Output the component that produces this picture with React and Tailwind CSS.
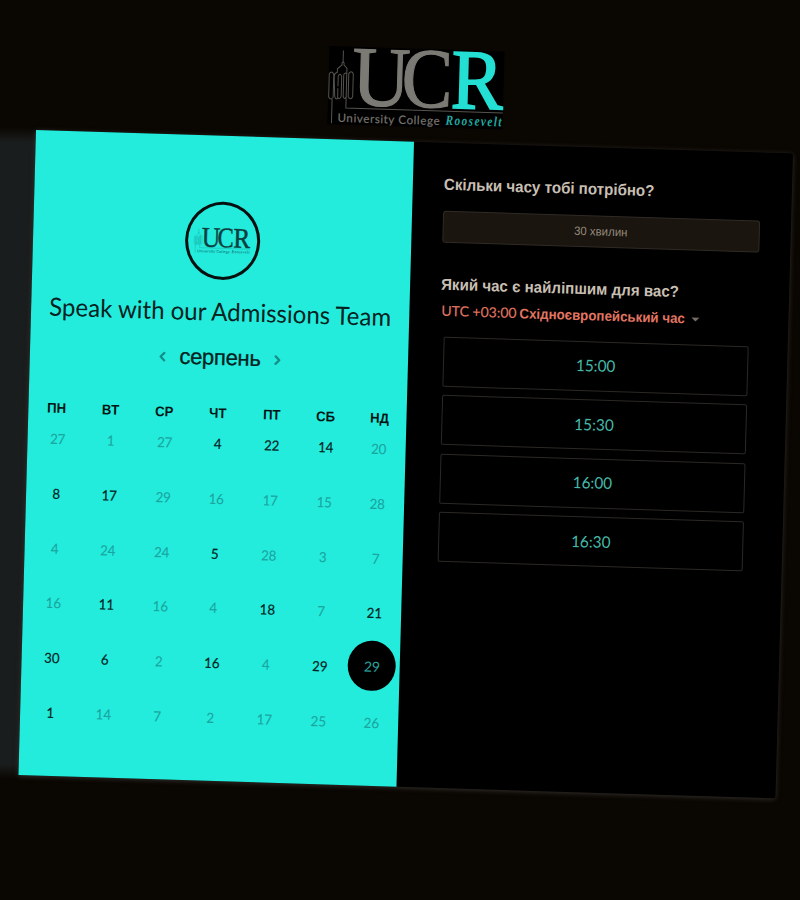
import { ChevronLeft, ChevronRight } from "lucide-react";

const WEEKDAYS = ["ПН", "ВТ", "СР", "ЧТ", "ПТ", "СБ", "НД"];

// Days marked true can be booked.
const DAYS = [
  [27], [1], [27], [4, true], [22, true], [14, true], [20],
  [8, true], [17, true], [29], [16], [17], [15], [28],
  [4], [24], [24], [5, true], [28], [3], [7],
  [16], [11, true], [16], [4], [18, true], [7], [21, true],
  [30, true], [6, true], [2], [16, true], [4], [29, true], [29, true],
  [1, true], [14], [7], [2], [17], [25], [26],
];
const SELECTED = 34;
const SLOTS = ["15:00", "15:30", "16:00", "16:30"];

const SANS = "font-['Lato','Liberation_Sans',sans-serif]";
const ARIAL = "font-['Liberation_Sans',sans-serif]";
const SERIF = "font-['Liberation_Serif',serif]";

function Logo({ className, main, accent, line, caption, script }) {
  return (
    <svg viewBox="0 0 175 78" preserveAspectRatio="none" className={`overflow-visible ${className}`}>
      <g fill="none" stroke={line} strokeWidth="1">
        <path d="M14 4v11M14 15l-1 1.5v2l-4.5 4v4M14 15l1 1.5v2l3 3v6M0.5 28q2-4 4.5 0v23q-2.500 4-4.500 0zM8.500 26q-3 1-3 4l1 20q1 4 3 2v-10M9.500 40v-10q1.500-4 3.500 0v20q-2 4-3.500 1M15 28q1.500-3 3 0M15 28v22q1.500 4 3 0M20 27q2.500-4 4.500 0v23q-2 4-4.500 0zM4 53v24M18 28v33.500h157" />
      </g>
      <g className={SERIF} fontSize="85">
        <text x="23.500" y="58" fill={main} stroke={main} strokeWidth="1.2" textLength="58" lengthAdjust="spacingAndGlyphs">U</text>
        <text x="73" y="58" fill={main} stroke={main} strokeWidth="1.2" textLength="51" lengthAdjust="spacingAndGlyphs">C</text>
        <text x="122.500" y="58" fill={accent} stroke={accent} strokeWidth="1.8" textLength="52" lengthAdjust="spacingAndGlyphs">R</text>
      </g>
      <text x="10" y="75.500" fontSize="11.500" fill={caption} stroke={caption} strokeWidth="0.2" className={SANS} textLength="102">University College</text>
      <text transform="translate(118 75) scale(0.8 1)" fontSize="14" fill={script} fontStyle="italic" fontWeight="bold" className={SERIF} textLength="70">Roosevelt</text>
    </svg>
  );
}

function Calendar() {
  return (
    <section className="flex h-full w-[378px] flex-col items-center bg-[#24ecdd]">
      <div className="mt-[66px] flex h-[78px] w-[75px] shrink-0 items-center justify-center rounded-[50%] border-[3px] border-[#06100f]">
        <Logo className="h-[26px] w-[56px]" main="#0b3f40" accent="#0b3f40" line="#118f8c" caption="#117c7a" script="#117c7a" />
      </div>
      <h1 className={`mt-[15px] h-8 origin-center scale-x-[0.96] whitespace-nowrap text-[25px] leading-8 text-[#052220] ${SANS}`}>
        Speak with our Admissions Team
      </h1>
      <div className="ml-[2px] mt-[15px] flex h-8 w-[131px] items-center justify-between text-[#138f89]">
        <ChevronLeft size={15} strokeWidth={3.6} />
        <span className={`text-[22px] leading-8 tracking-[-0.3px] text-[#042220] [-webkit-text-stroke:0.3px_#042220] ${ARIAL}`}>серпень</span>
        <ChevronRight size={15} strokeWidth={3.6} />
      </div>
      <div className={`ml-[1px] mt-[29px] grid h-5 w-[377px] grid-cols-7 text-center text-[14px] font-bold leading-5 text-[#021513] ${ARIAL}`}>
        {WEEKDAYS.map((d) => <span key={d}><span className="inline-block scale-x-[0.94]">{d}</span></span>)}
      </div>
      <div className={`ml-[3px] mt-[-6.5px] grid w-[375px] auto-rows-[54.7px] grid-cols-7 place-items-center text-[14px] ${SANS}`}>
        {DAYS.map(([day, open], i) => (
          <span
            key={i}
            className={
              i === SELECTED
                ? "relative left-[-1px] top-[-1.5px] flex h-[50px] w-[47.5px] items-center justify-center rounded-[50%] bg-black text-[#2aa39d]"
                : open
                  ? "scale-x-[0.95] text-[#032321] [-webkit-text-stroke:0.2px_#032321]"
                  : "scale-x-[0.95] text-[#1aa59e] [-webkit-text-stroke:0.1px_#1aa59e]"
            }
          >
            {day}
          </span>
        ))}
      </div>
    </section>
  );
}

function Times() {
  return (
    <section className="flex flex-1 flex-col items-start pl-[31px]">
      <h2 className={`mt-[32px] h-5 origin-left scale-x-[0.944] whitespace-nowrap text-[16px] font-bold leading-5 text-[#c8bfb3] ${ARIAL}`}>Скільки часу тобі потрібно?</h2>
      <button className="mt-[16px] flex h-8 w-[316.5px] items-center justify-center rounded-[3px] border border-[#302b25] bg-[#1a150f] text-[12px] text-[#93897b]">
        <span className={`scale-x-[0.95] ${ARIAL}`}>30 хвилин</span>
      </button>
      <h2 className={`mt-[32px] h-5 origin-left scale-x-[0.944] whitespace-nowrap text-[16px] font-bold leading-5 text-[#c8bfb3] ${ARIAL}`}>Який час є найліпшим для вас?</h2>
      <div className="ml-[1px] mt-[6px] flex h-5 items-center whitespace-nowrap leading-5 text-[#e27562]">
        <span className={`text-[14px] [-webkit-text-stroke:0.15px_#e27562] ${SANS}`}>UTC +03:00</span>
        <span className={`ml-[3px] w-[166px] origin-left scale-x-[0.95] text-[14px] font-bold ${ARIAL}`}>Східноєвропейський час</span>
        <span className="ml-[6px] mt-[2px] border-x-4 border-t-4 border-x-transparent border-t-[#756e64]" />
      </div>
      <div className="ml-[3.5px] mt-[15.5px] flex w-[305.5px] flex-col gap-[8.6px]">
        {SLOTS.map((t) => (
          <button key={t} className={`h-[50px] rounded-[2px] border border-[#2c2925] pb-[1px] text-[16px] text-[#45b9a8] ${SANS}`}>
            <span className="inline-block scale-x-[0.96]">{t}</span>
          </button>
        ))}
      </div>
    </section>
  );
}

export default function App() {
  return (
    <div className="h-[900px] w-[800px] overflow-hidden bg-[#0a0602] bg-[linear-gradient(to_bottom,transparent_127px,#1a1d1d_142px,#1a1d1d_764px,transparent_779px)] bg-[length:50px_900px] bg-no-repeat pl-[35.5px] pt-[37px]">
      <div className="flex w-[756.5px] origin-[0px_93px] flex-col items-center [transform:matrix(1,0.031,-0.0272,1,0,0)]">
        <Logo className="h-[78px] w-[175px] bg-black" main="#7b7a74" accent="#24dfd3" line="#55534e" caption="#77746e" script="#22aaa2" />
        <main className="mt-[15px] flex h-[644.5px] w-full rounded-r-[3px] bg-black shadow-[0_1px_5px_0px_#34312d]">
          <Calendar />
          <Times />
        </main>
      </div>
    </div>
  );
}
